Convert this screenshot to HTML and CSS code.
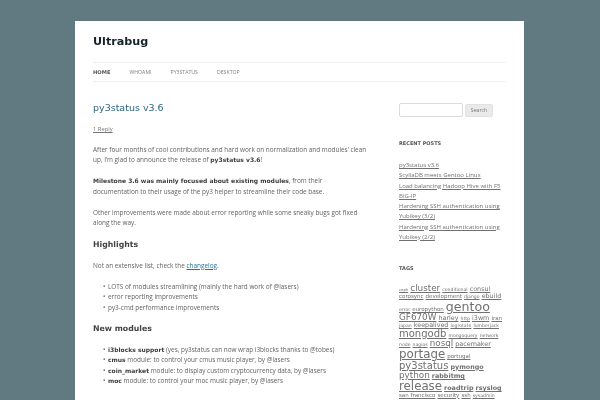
FILE: index.html
```html
<!DOCTYPE html>
<html lang="en">
<head>
<meta charset="utf-8">
<title>Ultrabug</title>
<link rel="stylesheet" href="styles.css">
</head>
<body>
<div class="page">
  <header class="masthead">
    <h1 class="site-title">Ultrabug</h1>
    <nav class="menu">
      <a class="current" href="#">HOME</a>
      <a href="#">WHOAMI</a>
      <a href="#">PY3STATUS</a>
      <a href="#">DESKTOP</a>
    </nav>
  </header>
  <div class="main">
    <article class="content">
      <h2 class="entry-title">py3status v3.6</h2>
      <p class="reply"><a href="#">1 Reply</a></p>
      <p>After four months of cool contributions and hard work on normalization and modules’ clean up, I’m glad to announce the release of <b>py3status v3.6</b>!</p>
      <p><b>Milestone 3.6 was mainly focused about existing modules</b>, from their documentation to their usage of the py3 helper to streamline their code base.</p>
      <p>Other improvements were made about error reporting while some sneaky bugs got fixed along the way.</p>
      <h3>Highlights</h3>
      <p>Not an extensive list, check the <a class="link" href="#">changelog</a>.</p>
      <ul>
        <li>LOTS of modules streamlining (mainly the hard work of @lasers)</li>
        <li>error reporting improvements</li>
        <li>py3-cmd performance improvements</li>
      </ul>
      <h3>New modules</h3>
      <ul>
        <li><b>i3blocks support</b> (yes, py3status can now wrap i3blocks thanks to @tobes)</li>
        <li><b>cmus</b> module: to control your cmus music player, by @lasers</li>
        <li><b>coin_market</b> module: to display custom cryptocurrency data, by @lasers</li>
        <li><b>moc</b> module: to control your moc music player, by @lasers</li>
      </ul>
      <h3 class="next">Ni</h3>
    </article>
    <aside class="sidebar">
      <form class="search">
        <input class="search-input" type="text" aria-label="Search">
        <button class="search-button" type="button">Search</button>
      </form>
      <h4 class="recent-heading">RECENT POSTS</h4>
      <ul class="recent">
        <li><a href="#">py3status v3.6</a></li>
        <li><a href="#">ScyllaDB meets Gentoo Linux</a></li>
        <li><a href="#">Load balancing Hadoop Hive with F5 BIG-IP</a></li>
        <li><a href="#">Hardening SSH authentication using Yubikey (3/2)</a></li>
        <li><a href="#">Hardening SSH authentication using Yubikey (2/2)</a></li>
      </ul>
      <h4 class="tags-heading">TAGS</h4>
      <div class="cloud">
        <a class="s0" href="#">ceph</a> <a class="s4" href="#">cluster</a> <a class="s1" href="#">conditional</a> <a class="s3" href="#">consul</a> <a class="s2" href="#">corosync</a> <a class="s2" href="#">development</a> <a class="s1" href="#">django</a> <a class="s3" href="#">ebuild</a> <a class="s1" href="#">error</a> <a class="s2" href="#">europython</a> <a class="s6" href="#">gentoo</a> <a class="s4" href="#">GF670W</a> <a class="s3" href="#">harley</a> <a class="s1" href="#">http</a> <a class="s3" href="#">i3wm</a> <a class="s2" href="#">iran</a> <a class="s1" href="#">japan</a> <a class="s3" href="#">keepalived</a> <a class="s1" href="#">logrotate</a> <a class="s1" href="#">lumberjack</a> <a class="s5" href="#">mongodb</a> <a class="s1" href="#">mongoquery</a> <a class="s1" href="#">network</a> <a class="s1" href="#">node</a> <a class="s1" href="#">nagios</a> <a class="s4" href="#">nosql</a> <a class="s3" href="#">pacemaker</a> <a class="s7" href="#">portage</a> <a class="s2" href="#">portugal</a> <a class="s5" href="#">py3status</a> <a class="s3 bold" href="#">pymongo</a> <a class="s4" href="#">python</a> <a class="s3 bold" href="#">rabbitmq</a> <a class="s7" href="#">release</a> <a class="s3 bold" href="#">roadtrip</a> <a class="s3 bold" href="#">rsyslog</a> <a class="s2" href="#">san francisco</a> <a class="s2" href="#">security</a> <a class="s2" href="#">ssh</a> <a class="s1" href="#">sysadmin</a>
      </div>
    </aside>
  </div>
</div>
</body>
</html>
```
FILE: styles.css
```css
* { box-sizing: border-box; }
html, body { margin: 0; height: 400px; overflow: hidden; }
body {
  background: #617a82;
  padding-top: 21px;
  font-family: "Open Sans", sans-serif;
  font-size: 6.4px;
  line-height: 10.5px;
  color: #626262;
}
a { color: inherit; }
.page {
  width: 449px;
  height: 379px;
  margin-left: 75px;
  padding: 0 18px;
  background: #fff;
  overflow: hidden;
  filter: blur(0.35px);
}
.masthead { padding-top: 12px; }
.site-title {
  margin: 0;
  font: bold 11.2px/17px "DejaVu Sans", sans-serif;
  color: #15232b;
}
.menu {
  display: flex;
  gap: 19px;
  margin-top: 12px;
  height: 20px;
  align-items: center;
  border-top: 1px solid #f0f0f0;
  border-bottom: 1px solid #f0f0f0;
  font-size: 5.2px;
  color: #808080;
}
.menu a { text-decoration: none; }
.menu .current { color: #555; font-weight: 700; font-family: "DejaVu Sans", sans-serif; }
.main { display: flex; gap: 31px; padding-top: 18px; }
.content { width: 275px; flex: none; }
.entry-title {
  margin: 0;
  font: 400 9.5px/16px "DejaVu Sans", sans-serif;
  color: #2f6580;
}
.content .reply { margin: 8px 0 10px; color: #777; font-size: 5.8px; }
.content p { margin: 0 0 10.5px; }
.content b { font-family: "DejaVu Sans", sans-serif; font-size: 6px; color: #3c3c3c; }
.content h3 {
  margin: 0 0 9.5px;
  font: bold 7.8px/12px "DejaVu Sans", sans-serif;
  color: #444;
}
.content .next { color: #999; margin-top: 15px; }
.link { color: #21759b; }
.content ul { margin: 0 0 10px; padding-left: 15px; list-style: none; }
.content li::before {
  content: "•";
  display: inline-block;
  width: 5px;
  margin-left: -5px;
}
.sidebar { width: 107px; flex: none; padding-top: 3px; }
.search { display: flex; gap: 2px; align-items: center; }
.search-input {
  width: 64px;
  height: 14px;
  padding: 0;
  border: 1px solid #dcdcdc;
  border-radius: 2px;
  background: #fff;
}
.search-button {
  width: 28px;
  height: 13px;
  padding: 0;
  border: 1px solid #e2e2e2;
  border-radius: 2px;
  background: #eaeaea;
  font: 5.2px "Open Sans", sans-serif;
  color: #777;
}
.recent-heading, .tags-heading {
  margin: 0;
  font: bold 5px/8px "DejaVu Sans", sans-serif;
  color: #555;
}
.recent-heading { margin-top: 22px; }
.recent { margin: 13px 0 0; padding: 0; list-style: none; color: #707070; font-size: 6px; line-height: 10.25px; }
.tags-heading { margin-top: 22px; }
.cloud { margin-top: 12px; font-family: "DejaVu Sans", sans-serif; line-height: 0; color: #707070; }
.cloud a { line-height: 1.04; }
.bold { font-weight: 700; }
.s0 { font-size: 3.8px; }
.s1 { font-size: 4.6px; }
.s2 { font-size: 5.5px; }
.s3 { font-size: 6.4px; }
.s4 { font-size: 8.8px; }
.s5 { font-size: 10px; }
.s6 { font-size: 12.6px; }
.s7 { font-size: 11.8px; }
```
